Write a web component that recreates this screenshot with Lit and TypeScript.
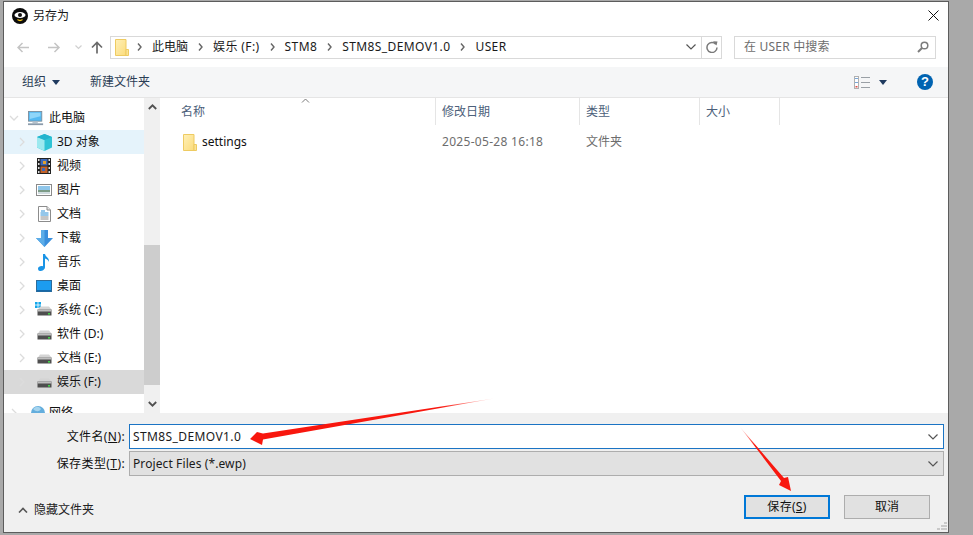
import { LitElement, html, css, svg } from "lit";
import { customElement } from "lit/decorators.js";

const folder = (w = 14, h = 17) => html`<svg class="ico" width=${w} height=${h} viewBox="0 0 14 17">
  <defs><linearGradient id="fg" x1="0" y1="0" x2="1" y2="1"><stop offset="0" stop-color="#fff0b8"/><stop offset="1" stop-color="#fbdc7c"/></linearGradient></defs>
  <path d="M.5.5h10.5v16H.5z" fill="url(#fg)" stroke="#eecb62"/>
  <path d="M11 10.5h2.5v6H11z" fill="#fbe395" stroke="#eecb62"/></svg>`;

const drive = (win = false) => html`<svg class="ico" width="18" height="16" viewBox="0 0 18 16">
  ${win ? svg`<g fill="#13a6ea"><rect x="0" y="0" width="2.6" height="2.6"/><rect x="3.4" y="0" width="2.6" height="2.6"/><rect x="0" y="3.4" width="2.6" height="2.6"/><rect x="3.4" y="3.4" width="2.6" height="2.6"/></g>` : ""}
  <path d="M3 7.5 5 4.5h9l2.5 3z" fill="#d4d4d4"/>
  <path d="M2.500 7.500h14v6h-14z" fill="#4e4e4e"/><path d="M2.500 7.500h14v2h-14z" fill="#bdbdbd"/>
  <rect x="13" y="11" width="2" height="1.600" fill="#43d14a"/></svg>`;

const icons: Record<string, unknown> = {
  pc: html`<svg class="ico" width="16" height="15" viewBox="0 0 18 17" preserveAspectRatio="none"><rect x=".5" y=".5" width="15" height="11" fill="#54b9f2" stroke="#7c8c9a"/><path d="M2 2h12v4L2 9z" fill="#8fd6fa"/><rect x="5" y="12" width="6" height="2" fill="#b8c4ce"/><rect x="0" y="14" width="17" height="2" fill="#8b9bab"/></svg>`,
  cube: html`<svg class="ico" width="17" height="17" viewBox="0 0 17 17"><path d="M8.500 0 16 3v10.500L8.500 17 1 13.500V3z" fill="#2fc4d6"/><path d="M1 3l7.500 3v11L1 13.500z" fill="#9ce9ef"/><path d="M8.500 0 16 3l-7.500 3L1 3z" fill="#22b3ce"/></svg>`,
  film: html`<svg class="ico" width="14" height="16" viewBox="0 0 14 16"><rect width="14" height="16" fill="#222"/><g fill="#ddd"><rect x="1" y="1" width="1.500" height="2"/><rect x="1" y="5" width="1.500" height="2"/><rect x="1" y="9" width="1.500" height="2"/><rect x="1" y="13" width="1.500" height="2"/><rect x="11.500" y="1" width="1.500" height="2"/><rect x="11.500" y="5" width="1.500" height="2"/><rect x="11.500" y="9" width="1.500" height="2"/><rect x="11.500" y="13" width="1.500" height="2"/></g><rect x="3.500" y="1" width="7" height="6.500" fill="#3d68b8"/><rect x="3.500" y="8.500" width="7" height="6.500" fill="#c2622a"/><rect x="6" y="3" width="3" height="3" fill="#e0a030"/><rect x="5" y="10" width="3" height="3" fill="#3d68b8"/></svg>`,
  pic: html`<svg class="ico" width="16" height="12" viewBox="0 0 16 12"><rect x=".5" y=".5" width="15" height="11" fill="#fff" stroke="#8a8a8a"/><rect x="2" y="2" width="12" height="4" fill="#8fc6ea"/><rect x="2" y="6" width="12" height="2" fill="#7d9c88"/><rect x="2" y="8" width="12" height="2" fill="#d0dce0"/></svg>`,
  doc: html`<svg class="ico" width="13" height="16" viewBox="0 0 13 16"><path d="M.5.500h8.500l3.500 3.500v11.500H.5z" fill="#fff" stroke="#8c8c8c"/><path d="M9 .5V4h3.500" fill="#e6e6e6" stroke="#8c8c8c"/><path d="M3 5h4M2.500 7h8M2.500 9h8" stroke="#2a8fd6"/><path d="M2.500 11h8M2.500 13h8" stroke="#8c8c8c"/></svg>`,
  down: html`<svg class="ico" width="17" height="17" viewBox="0 0 17 17"><path d="M5 0h7v8h5l-8.500 9L0 8h5z" fill="#3a8fdc"/><path d="M5 0h3.500v17L0 8h5z" fill="#5cade8"/></svg>`,
  music: html`<svg class="ico" width="12" height="17" viewBox="0 0 12 17"><path d="M5 0h2c.5 3 4.500 3.500 4 8-.5-2-2.500-3-4-3.500V13c0 2.500-2.500 4-5 4C.5 17 0 15.500 0 14.500 0 12.500 3 11.300 5 12.200z" fill="#1a94e6"/></svg>`,
  desk: html`<svg class="ico" width="16" height="12" viewBox="0 0 16 12"><rect x=".5" y=".5" width="15" height="11" fill="#1c9cf0" stroke="#2c6c9c"/><rect x="1" y="10" width="14" height="1.500" fill="#1568a8"/></svg>`,
  net: html`<svg class="ico" width="18" height="17" viewBox="0 0 18 17"><circle cx="10" cy="8" r="7" fill="#64aedd"/><path d="M5 4c3-3 6-3 8 0-2 3-5 3-8 0z" fill="#a6d4ee"/><rect x="0" y="13" width="18" height="1.500" fill="#2c6c9c"/></svg>`,
};

const chevR = html`<svg class="tw" width="6" height="10" viewBox="0 0 6 10"><path d="M1 1l4 4-4 4" fill="none" stroke="#dcdcdc" stroke-width="1.300"/></svg>`;
const chevD = html`<svg class="tw" width="10" height="6" viewBox="0 0 10 6"><path d="M1 1l4 4 4-4" fill="none" stroke="#dcdcdc" stroke-width="1.300"/></svg>`;
const crumbSep = html`<svg class="sep" width="5" height="8" viewBox="0 0 5 8"><path d="M1 .5 4 4 1 7.500" fill="none" stroke="#666" stroke-width="1.400"/></svg>`;
const selChev = html`<svg width="10" height="6" viewBox="0 0 10 6"><path d="M.5.500 5 5 9.500.500" fill="none" stroke="#555" stroke-width="1.200"/></svg>`;
const caret = html`<svg width="8" height="5" viewBox="0 0 8 5"><path d="M0 0h8L4 5z" fill="#1f3a5f"/></svg>`;

const items = [
  { ic: "cube", t: "3D 对象", cls: "hover" },
  { ic: "film", t: "视频" },
  { ic: "pic", t: "图片" },
  { ic: "doc", t: "文档" },
  { ic: "down", t: "下载" },
  { ic: "music", t: "音乐" },
  { ic: "desk", t: "桌面" },
  { ic: "sys", t: "系统 (C:)" },
  { ic: "drv", t: "软件 (D:)" },
  { ic: "drv", t: "文档 (E:)" },
  { ic: "drv", t: "娱乐 (F:)", cls: "sel" },
];

@customElement("app-root")
export class AppRoot extends LitElement {
  static styles = css`
    :host { display: block; width: 973px; height: 535px; overflow: hidden; position: relative; background: #a9a9a9;
      font: 12px/16px "Noto Sans", "Noto Sans CJK SC", sans-serif; color: #1a1a1a; }
    .page { box-sizing: border-box; width: 973px; height: 535px; padding: 1px 24px 2px 3px; }
    .win { box-sizing: border-box; height: 100%; display: flex; flex-direction: column; background: #fff; border: 1px solid #5c5c5c; }
    .title { height: 29px; display: flex; align-items: center; padding: 0 0 2px 8px; gap: 5px; flex: none; box-sizing: border-box; }
    .close { margin-left: auto; margin-right: 9px; display: flex; }
    .nav { height: 36px; flex: none; display: flex; align-items: center; padding: 0 0 4px 13px; box-sizing: border-box; }
    .navbtn { display: flex; width: 30px; }
    .navchev { display: flex; margin-left: -2px; width: 14px; }
    .up { display: flex; width: 18px; margin-left: 2px; }
    .addr { box-sizing: border-box; width: 612px; height: 23px; margin-left: 1px; border: 1px solid #d9d9d9; display: flex; align-items: center; padding-left: 4px; }
    .addr .crumb { margin: 0 10px 0 10px; }
    .addr .wide { letter-spacing: .4px; }
    .addr .first { margin-left: 8px; display: flex; }
    .addr .ddl { margin-left: auto; width: 20px; height: 100%; display: flex; align-items: center; justify-content: center; border-right: 1px solid #d9d9d9; }
    .addr .ref { width: 19px; display: flex; justify-content: center; }
    .search { box-sizing: border-box; width: 202px; height: 23px; margin-left: 12px; border: 1px solid #d9d9d9; display: flex; align-items: center; padding: 0 6px 0 9px; color: #6d6d6d; justify-content: space-between; letter-spacing: .2px; }
    .tools { height: 31px; flex: none; background: #f5f6f7; border-bottom: 1px solid #e5e5e5; display: flex; align-items: center; padding: 0 15px 0 18px; color: #2b3d55; box-sizing: border-box; }
    .org { display: flex; align-items: center; gap: 6px; width: 68px; }
    .viewbtn { margin-left: auto; display: flex; align-items: center; gap: 9px; }
    .help { margin-left: 30px; width: 16px; height: 16px; border-radius: 50%; background: #0063b1; color: #fff; font: bold 13px/16px "Liberation Sans", sans-serif; text-align: center; }
    .main { flex: 1; min-height: 0; display: flex; }
    .side { width: 140px; flex: none; overflow: hidden; padding-top: 8px; box-sizing: border-box; }
    .row { height: 24px; display: flex; align-items: center; box-sizing: border-box; white-space: nowrap; color: #111; }
    .row.hover { background: #e5f3fb; }
    .row.sel { background: #d9d9d9; }
    .row.top { padding-left: 5px; }
    .row.top .icon { width: 21px; margin-left: 9px; justify-content: flex-start; }
    .row.net { margin-top: 7px; }
    .row.net .tw { margin: 0 2px; }
    .row.sub { padding-left: 15px; }
    .row.sub .tw { margin-right: 8px; }
    .icon { display: flex; align-items: center; justify-content: center; flex: none; }
    .row.sub .icon { width: 22px; margin-right: 2px; }
    .sb { width: 16px; flex: none; background: #f0f0f0; display: flex; flex-direction: column; align-items: center; box-sizing: border-box; }
    .sb .arrow { height: 18px; display: flex; align-items: center; flex: none; }
    .sb .track { flex: 1; width: 100%; display: flex; flex-direction: column; }
    .sb .gap1 { height: 129px; }
    .sb .thumb { height: 140px; background: #cdcdcd; }
    .list { flex: 1; min-width: 0; }
    .head { display: flex; height: 27px; color: #4c607a; }
    .col { box-sizing: border-box; border-right: 1px solid #e5e5e5; padding-left: 6px; display: flex; align-items: center; }
    .c1 { width: 276px; padding-left: 21px; position: relative; }
    .c2 { width: 144px; }
    .c3 { width: 120px; }
    .c4 { width: 80px; }
    .caretUp { position: absolute; left: 141px; top: 0; display: flex; }
    .item { height: 24px; margin-top: 5px; display: flex; align-items: center; color: #6d6d6d; }
    .item .n { width: 276px; padding-left: 23px; box-sizing: border-box; display: flex; align-items: center; gap: 5px; color: #111; }
    .item .d { width: 144px; padding-left: 6px; box-sizing: border-box; letter-spacing: .3px; }
    .item .k { padding-left: 6px; }
    .foot { height: 119px; flex: none; background: #f0f0f0; position: relative; display: flex; flex-direction: column; }
    .fld { display: flex; align-items: center; }
    .fld label { width: 125px; text-align: right; padding-right: 4px; box-sizing: border-box; color: #111; letter-spacing: .4px; }
    .fld u { text-decoration: underline; }
    .box { box-sizing: border-box; width: 815px; display: flex; align-items: center; justify-content: space-between; padding: 0 5px 0 3px; }
    .f1 { margin-top: 11px; }
    .f1 .box { height: 25px; background: #fff; border: 1px solid #1b74c4; letter-spacing: .4px; }
    .f2 { margin-top: 2px; }
    .f2 .box { height: 25px; background: #e1e1e1; border: 1px solid #adadad; letter-spacing: .1px; }
    .acts { display: flex; align-items: center; margin-top: 19px; padding-left: 14px; }
    .hide { display: flex; align-items: center; gap: 6px; color: #222; margin-top: 6px; }
    .btn { box-sizing: border-box; width: 86px; height: 24px; background: #e1e1e1; border: 1px solid #adadad; display: flex; align-items: center; justify-content: center; color: #111; }
    .btn.pri { border: 2px solid #0078d7; letter-spacing: .3px; }
    .btn + .btn { margin-left: 14px; }
    .btns { margin-left: auto; display: flex; margin-right: 18px; }
    .grip { position: absolute; right: 0; bottom: 0; display: flex; }
    .overlay { position: absolute; left: 0; top: 0; pointer-events: none; }
    .ico { display: block; }
    .tw { flex: none; }
    .sep { flex: none; }
  `;

  icon(k: string) {
    if (k === "sys") return drive(true);
    if (k === "drv") return drive();
    return icons[k];
  }

  render() {
    const crumbs = ["此电脑", "娱乐 (F:)", "STM8", "STM8S_DEMOV1.0", "USER"];
    return html`
    <div class="page"><div class="win">
      <div class="title">
        <svg width="16" height="16" viewBox="0 0 16 16"><circle cx="8" cy="8" r="8" fill="#0b0b0b"/><ellipse cx="8" cy="7" rx="5.500" ry="3" fill="#fff"/><circle cx="8" cy="7" r="2" fill="#111"/><path d="M5.500 11.500c1.500 1.200 3.500 1.200 5 0" stroke="#f5c518" stroke-width="1.300" fill="none"/></svg>
        <span>另存为</span>
        <svg class="close" width="11" height="11" viewBox="0 0 11 11"><path d="M.5.500l10 10M10.500.500l-10 10" stroke="#111" stroke-width="1"/></svg>
      </div>
      <div class="nav">
        <svg class="navbtn" width="13" height="11" viewBox="0 0 30 11" preserveAspectRatio="xMinYMid meet"><path d="M12 5.500H1M5.500 1 1 5.500 5.500 10" fill="none" stroke="#c4c4c4" stroke-width="1.500"/></svg>
        <svg class="navbtn" width="13" height="11" viewBox="0 0 30 11" preserveAspectRatio="xMinYMid meet"><path d="M1 5.500h11M7.500 1 12 5.500 7.500 10" fill="none" stroke="#c4c4c4" stroke-width="1.500"/></svg>
        <svg class="navchev" width="14" height="5" viewBox="0 0 14 5" preserveAspectRatio="xMinYMid meet"><path d="M.5.500 3.500 3.500 6.500.500" fill="none" stroke="#d0d0d0" stroke-width="1.200"/></svg>
        <svg class="up" width="18" height="13" viewBox="0 0 18 13" preserveAspectRatio="xMinYMid meet"><path d="M6 12.500V1.500M1 6.500l5-5 5 5" fill="none" stroke="#6a6a6a" stroke-width="1.700"/></svg>
        <div class="addr">
          ${folder()}
          <span class="first"></span>
          ${crumbs.map((c) => html`${crumbSep}<span class="crumb ${/[A-Z]/.test(c) ? "wide" : ""}">${c}</span>`)}
          <span class="ddl">${selChev}</span>
          <span class="ref"><svg width="12" height="12" viewBox="0 0 12 12"><path d="M9.800 3.200A5 5 0 1 0 11 6.500" fill="none" stroke="#7a7a7a" stroke-width="1.500"/><path d="M7 .2 11.500 .5 10.500 4.500z" fill="#7a7a7a"/></svg></span>
        </div>
        <div class="search">
          <span>在 USER 中搜索</span>
          <svg width="12" height="12" viewBox="0 0 12 12"><circle cx="7.500" cy="4.500" r="3.300" fill="none" stroke="#7c7c7c" stroke-width="1.500"/><path d="M5 7 1 11" stroke="#7c7c7c" stroke-width="2"/></svg>
        </div>
      </div>
      <div class="tools">
        <span class="org">组织 ${caret}</span>
        <span>新建文件夹</span>
        <span class="viewbtn">
          <svg width="16" height="13" viewBox="0 0 16 13"><rect x=".5" y=".5" width="4" height="12" fill="#fff" stroke="#b0b0b0"/><path d="M1 2.500h3M1 6.500h3" stroke="#7aa7d8"/><rect x="1.500" y="10" width="2" height="1.500" fill="#e0504a"/><path d="M7 1.500h9M7 6.500h9M7 11.500h9" stroke="#9aa0a6"/></svg>
          ${caret}
        </span>
        <span class="help">?</span>
      </div>
      <div class="main">
        <div class="side">
          <div class="row top">${chevD}<span class="icon">${icons.pc}</span><span>此电脑</span></div>
          ${items.map((it) => html`<div class="row sub ${it.cls ?? ""}">${chevR}<span class="icon">${this.icon(it.ic)}</span><span>${it.t}</span></div>`)}
          <div class="row top net">${chevR}<span class="icon">${icons.net}</span><span>网络</span></div>
        </div>
        <div class="sb">
          <span class="arrow"><svg width="9" height="6" viewBox="0 0 9 6"><path d="M.8 5 4.500 1.300 8.200 5" fill="none" stroke="#505050" stroke-width="1.800"/></svg></span>
          <div class="track"><div class="gap1"></div><div class="thumb"></div></div>
          <span class="arrow"><svg width="9" height="6" viewBox="0 0 9 6"><path d="M.8 1 4.500 4.700 8.200 1" fill="none" stroke="#505050" stroke-width="1.800"/></svg></span>
        </div>
        <div class="list">
          <div class="head">
            <div class="col c1"><span>名称</span><span class="caretUp"><svg width="9" height="5" viewBox="0 0 9 5"><path d="M1 4.500 4.500 1 8 4.500" fill="none" stroke="#7a7a7a"/></svg></span></div>
            <div class="col c2">修改日期</div>
            <div class="col c3">类型</div>
            <div class="col c4">大小</div>
          </div>
          <div class="item">
            <span class="n">${folder()}<span>settings</span></span>
            <span class="d">2025-05-28 16:18</span>
            <span class="k">文件夹</span>
          </div>
        </div>
      </div>
      <div class="foot">
        <div class="fld f1"><label>文件名(<u>N</u>):</label><div class="box"><span>STM8S_DEMOV1.0</span>${selChev}</div></div>
        <div class="fld f2"><label>保存类型(<u>T</u>):</label><div class="box"><span>Project Files (*.ewp)</span>${selChev}</div></div>
        <div class="acts">
          <span class="hide"><svg width="10" height="6" viewBox="0 0 10 6"><path d="M1 5.500 5 1.500l4 4" fill="none" stroke="#555" stroke-width="1.600"/></svg>隐藏文件夹</span>
          <div class="btns"><div class="btn pri">保存(<u>S</u>)</div><div class="btn">取消</div></div>
        </div>
        <svg class="grip" width="11" height="10" viewBox="0 0 11 10"><g fill="#c9c9c9"><rect x="7" y="0" width="3" height="2"/><rect x="4" y="3" width="3" height="2"/><rect x="7" y="3" width="3" height="2"/><rect x="0" y="6" width="3" height="2"/><rect x="4" y="6" width="3" height="2"/><rect x="7" y="6" width="3" height="2"/></g></svg>
      </div>
    </div></div>
    <svg class="overlay" width="973" height="535" viewBox="0 0 973 535">
      <defs>
        <linearGradient id="a1" gradientUnits="userSpaceOnUse" x1="494" y1="399" x2="440" y2="407"><stop offset="0" stop-color="#ff2015" stop-opacity="0.15"/><stop offset="1" stop-color="#f8170e"/></linearGradient>
        <linearGradient id="a2" gradientUnits="userSpaceOnUse" x1="740" y1="427" x2="755" y2="446"><stop offset="0" stop-color="#ff2015" stop-opacity="0.1"/><stop offset="1" stop-color="#f8170e"/></linearGradient>
      </defs>
      <path d="M494 398.500 263 433.500 257 432 250 439 262 445 263 439.500z" fill="url(#a1)"/>
      <path d="M740 427 784 478 788 477 791 491 779 485 781 481z" fill="url(#a2)"/>
    </svg>`;
  }
}
